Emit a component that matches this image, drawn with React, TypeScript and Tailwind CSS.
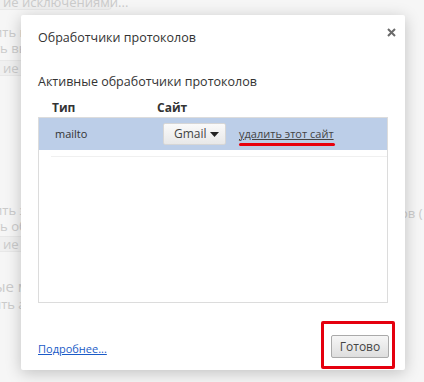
import React from 'react';

const font = { fontFamily: '"Open Sans", "Noto Sans", Arial, sans-serif' };

const BgLine: React.FC<{ children: React.ReactNode; h: string; className?: string }> = ({ children, h, className }) => (
  <div className={`${h} flex items-center text-[13px] leading-[14px] text-[#cbcbcb] whitespace-nowrap ${className ?? ''}`}>{children}</div>
);

const BgButton: React.FC<{ children: React.ReactNode; className?: string }> = ({ children, className }) => (
  <div className={`flex items-center border border-[#e8e8e8] bg-[#f0f0f0] rounded-sm px-2 text-[13px] leading-[14px] text-[#cbcbcb] whitespace-nowrap ${className ?? ''}`}>
    {children}
  </div>
);

export default function App() {
  return (
    <div className="relative w-[424px] h-[382px] overflow-hidden bg-[#f6f6f6]" style={font}>
      {/* Страница настроек за затемнением */}
      <div className="flex flex-col ml-[-6px]">
        <BgButton className="-mt-[6px] w-[118px] h-[16px]">ие исключениями...</BgButton>
        <BgLine h="h-[16px] mt-[14px]">ить в</BgLine>
        <BgLine h="h-[16px]">ть вы</BgLine>
        <BgButton className="mt-[4px] w-[60px] h-[16px]">ие ис</BgButton>
        <BgLine h="h-[16px] mt-[126px]">ить з</BgLine>
        <BgLine h="h-[16px]">ть об</BgLine>
        <BgButton className="mt-[2px] w-[60px] h-[16px]">ие об</BgButton>
        <BgLine h="h-[20px] mt-[24px]" className="text-[15px] leading-[16px]">ые м</BgLine>
        <BgLine h="h-[16px]">ять а</BgLine>
        <BgLine h="h-[16px] mt-[77px]">ие для воспроизведения</BgLine>
      </div>
      <div className="absolute left-[400px] top-[204px] text-[13px] text-[#cbcbcb] whitespace-nowrap">ов (</div>

      {/* Диалог */}
      <div className="absolute left-[21px] top-[15px] w-[384px] h-[355px] bg-white rounded-[2px] shadow-[0_3px_16px_rgba(0,0,0,0.22)] flex flex-col px-[17px]">
        <div className="flex justify-between items-start pt-[14px]">
          <div className="text-[12.5px] text-[#333] leading-[18px]">Обработчики протоколов</div>
          <svg width="9" height="9" viewBox="0 0 9 9" className="mt-[-1px] mr-[-8px]">
            <path d="M1 1 L8 8 M8 1 L1 8" stroke="#6a6a6a" strokeWidth="2" />
          </svg>
        </div>

        <div className="mt-[26px] text-[12.5px] text-[#333] leading-[18px]">Активные обработчики протоколов</div>

        <div className="flex mt-[9px] text-[12px] font-bold text-[#333] leading-[16px]">
          <div className="w-[119px] pl-[14px]">Тип</div>
          <div>Сайт</div>
        </div>

        <div className="mt-[1px] h-[186px] border border-[#dcdcdc] flex flex-col">
          <div className="h-[32px] bg-[#bccee8] flex items-center text-[11px] text-[#333]">
            <div className="w-[124px] pl-[16px]">mailto</div>
            <div className="w-[63px] h-[22px] flex items-center justify-between pl-[10px] pr-[6px] rounded-[2px] bg-gradient-to-b from-[#fafafa] to-[#e8e8e8] border border-[#d6d6d6] text-[12px] text-[#444]">
              <span>Gmail</span>
              <svg width="9" height="5" viewBox="0 0 9 5">
                <path d="M0 0 L9 0 L4.5 5 Z" fill="#222" />
              </svg>
            </div>
            <div className="relative ml-[13px]">
              <span className="underline text-[#444]">удалить этот сайт</span>
              <div className="absolute left-0 top-[17px] w-[96px] h-[3px] rounded-full bg-[#e8000d]" />
            </div>
          </div>
          <div className="ml-[12px] h-[7px] border-b border-[#f0f0f0]" />
        </div>

        <div className="mt-auto mb-[2px] flex items-center justify-between">
          <a className="text-[11px] text-[#1a5bc7] underline leading-[16px] mt-[8px]">Подробнее...</a>
          <div className="border-[3px] border-[#e5000e] rounded-[2px] w-[74px] h-[48px] flex items-center justify-end pr-[3px] -mr-[7px] mb-[-1px]">
            <div className="w-[58px] h-[23px] flex items-center justify-center rounded-[2px] border border-[#aaa] bg-gradient-to-b from-[#f6f6f6] to-[#dedede] text-[12px] text-[#444] mt-[3px]">
              Готово
            </div>
          </div>
        </div>
      </div>
    </div>
  );
}
